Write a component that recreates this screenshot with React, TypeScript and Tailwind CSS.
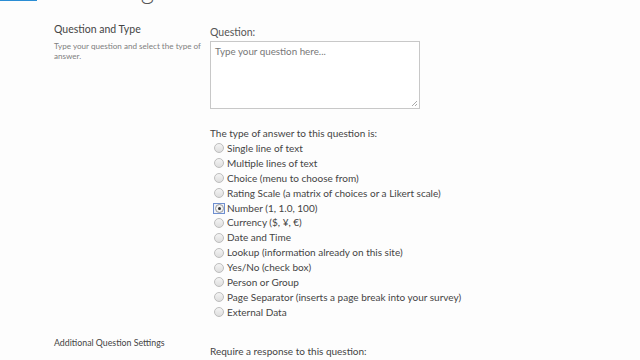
const options = [
  'Single line of text',
  'Multiple lines of text',
  'Choice (menu to choose from)',
  'Rating Scale (a matrix of choices or a Likert scale)',
  'Number (1, 1.0, 100)',
  'Currency ($, ¥, €)',
  'Date and Time',
  'Lookup (information already on this site)',
  'Yes/No (check box)',
  'Person or Group',
  'Page Separator (inserts a page break into your survey)',
  'External Data',
];

function Radio({ checked }: { checked?: boolean }) {
  if (checked) {
    return (
      <span className="flex h-[11px] w-[12px] items-center justify-center border border-[#6f8fcf] bg-[#eef2fb]">
        <span className="flex h-[9px] w-[9px] items-center justify-center rounded-full border border-[#9a9a9a] bg-[#f4f4f4]">
          <span className="h-[3px] w-[3px] rounded-full bg-[#333]" />
        </span>
      </span>
    );
  }
  return (
    <span className="flex h-[11px] w-[12px] items-center justify-center">
      <span className="h-[10px] w-[10px] rounded-full border border-[#bdbdbd] bg-gradient-to-b from-[#f4f4f4] to-[#dedede]" />
    </span>
  );
}

export default function App() {
  return (
    <div className="h-[360px] w-[640px] overflow-hidden bg-[#fdfdfd] font-['Lato',sans-serif] text-[#444]">
      <div className="flex h-[4px] items-start overflow-hidden">
        <div className="h-[1px] w-[37px] bg-[#2a8dd4]" />
        <div className="-mt-[25px] ml-[39px] text-[26px] font-light leading-[28px] text-[#555]">Settings</div>
      </div>

      <div className="flex pt-[17px]">
        <div className="w-[210px] shrink-0 pl-[54px] pr-[4px]">
          <div className="text-[10.5px] leading-[16px] text-[#444]">Question and Type</div>
          <div className="mt-[4px] text-[8.1px] leading-[10px] text-[#808080]">
            Type your question and select the type of answer.
          </div>
        </div>
        <div>
          <div className="mt-[4px] text-[10.5px] leading-[14px] text-[#555]">Question:</div>
          <div className="relative mt-[2px] h-[68px] w-[210px] border border-[#c8c8c8] bg-white px-[4px] py-[2px]">
            <div className="text-[9.8px] leading-[14px] text-[#777]">Type your question here...</div>
            <svg className="absolute bottom-[1px] right-[1px]" width="7" height="7" viewBox="0 0 7 7">
              <path d="M6 1L1 6M6 4L4 6" stroke="#aaa" strokeWidth="1" />
            </svg>
          </div>
        </div>
      </div>

      <div className="ml-[210px] mt-[17px]">
        <div className="text-[10px] leading-[14px] text-[#444]">The type of answer to this question is:</div>
        <div className="mt-[1px] flex flex-col">
          {options.map((o, i) => (
            <div key={o} className="flex h-[14.9px] items-center gap-[2px] pl-[3px] text-[10px] text-[#444]">
              <Radio checked={i === 4} />
              <span className="whitespace-nowrap">{o}</span>
            </div>
          ))}
        </div>
      </div>

      <div className="mt-[16px] flex">
        <div className="w-[210px] shrink-0 pl-[54px] text-[8.8px] leading-[14px] text-[#444]">Additional Question Settings</div>
        <div className="mt-[8px] text-[10px] leading-[14px] text-[#444]">Require a response to this question:</div>
      </div>
    </div>
  );
}
